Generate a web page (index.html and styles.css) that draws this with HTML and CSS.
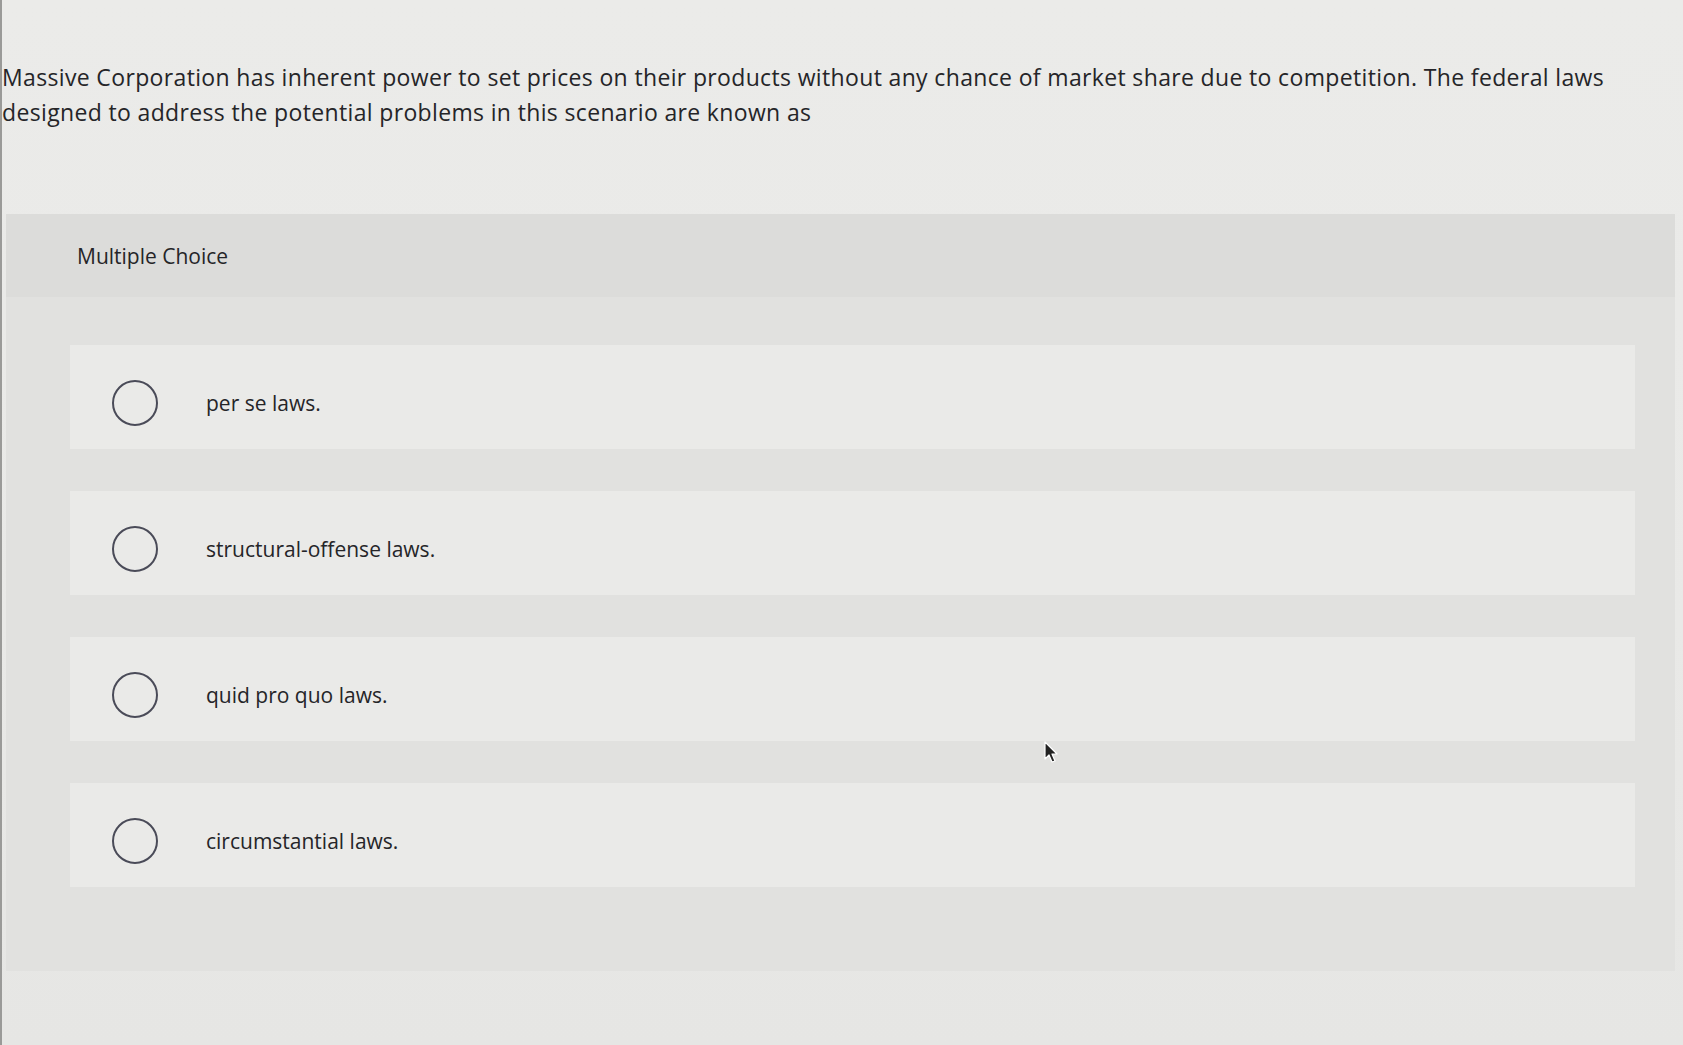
FILE: index.html
```html
<!DOCTYPE html>
<html lang="en">
<head>
<meta charset="utf-8">
<title>Multiple Choice</title>
<link rel="stylesheet" href="styles.css">
</head>
<body>
<div class="page">
  <p class="question">Massive Corporation has inherent power to set prices on their products without any chance of market share due to competition. The federal laws designed to address the potential problems in this scenario are known as</p>
  <section class="panel">
    <div class="panel-head">Multiple Choice</div>
    <div class="options">
      <label class="option"><span class="radio"></span><span class="opt-text">per se laws.</span></label>
      <label class="option"><span class="radio"></span><span class="opt-text">structural-offense laws.</span></label>
      <label class="option"><span class="radio"></span><span class="opt-text">quid pro quo laws.</span></label>
      <label class="option"><span class="radio"></span><span class="opt-text">circumstantial laws.</span></label>
    </div>
  </section>
  <svg class="cursor" width="16" height="24" viewBox="0 0 16 24"><path d="M1 1 L1 18 L5 14 L8 21 L11 20 L8 13 L13 13 Z" fill="#222" stroke="#fff" stroke-width="1.2" stroke-linejoin="round"/></svg>
</div>
</body>
</html>
```
FILE: styles.css
```css
html, body {
  margin: 0;
  padding: 0;
}
body {
  background: #eaeae8;
  font-family: "Open Sans", Lato, "Liberation Sans", sans-serif;
  color: #252528;
}
.page {
  position: relative;
  width: 1683px;
  height: 1045px;
  overflow: hidden;
  background: linear-gradient(180deg, #ebebe9 0%, #e9e9e7 60%, #e6e6e4 100%);
  border-left: 2px solid #9a9a98;
  box-sizing: border-box;
}
.question {
  margin: 0;
  width: 1640px;
  padding: 60px 0 0 0;
  font-size: 23px;
  line-height: 35px;
  letter-spacing: 0.35px;
}
.panel {
  margin: 84px 8px 0 4px;
  background: #e1e1df;
  padding-bottom: 84px;
}
.panel-head {
  height: 83px;
  background: #dcdcda;
  display: flex;
  align-items: center;
  padding-left: 71px;
  font-size: 21px;
}
.options {
  display: flex;
  flex-direction: column;
  gap: 42px;
  padding: 48px 40px 0 64px;
}
.option {
  height: 104px;
  background: #eaeae8;
  display: flex;
  align-items: center;
  padding: 12px 0 0 42px;
  box-sizing: border-box;
  font-size: 21px;
}
.radio {
  width: 42px;
  height: 42px;
  border: 2px solid #4a4b58;
  border-radius: 50%;
  flex: none;
}
.opt-text {
  margin-left: 48px;
}
.cursor {
  position: absolute;
  left: 1042px;
  top: 741px;
}
```
